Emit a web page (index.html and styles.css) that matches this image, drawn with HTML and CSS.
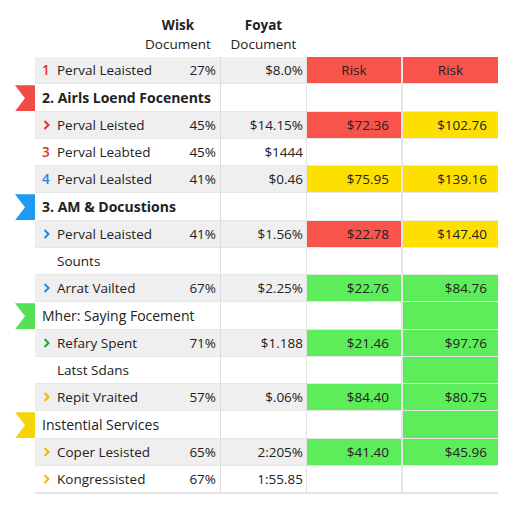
FILE: index.html
```html
<!DOCTYPE html>
<html lang="en">
<head>
    <meta charset="UTF-8">
    <title>Cost Table</title>
    <link rel="stylesheet" href="styles.css">
</head>
<body>
    <div class="sheet">
        <!-- Column headings -->
        <div class="head">
            <div></div>
            <div class="head-cell"><b>Wisk</b><span>Document</span></div>
            <div class="head-cell"><b>Foyat</b><span>Document</span></div>
        </div>

        <div class="table">
            <div class="row shade">
                <div class="name"><span class="mark red">1</span>Perval Leaisted</div>
                <div class="pct">27%</div>
                <div class="val">$8.0%</div>
                <div class="cell c-red center">Risk</div>
                <div class="cell c-red center last">Risk</div>
            </div>

            <div class="row section">
                <span class="flag f-red"></span>
                <div class="title bold">2. Airls Loend Focenents</div>
                <div class="val"></div>
                <div class="cell"></div>
                <div class="cell last"></div>
            </div>

            <div class="row shade">
                <div class="name"><span class="mark red"><svg width="7" height="10" viewBox="0 0 7 10"><path d="M1.5 1 L5.5 5 L1.5 9" fill="none" stroke="currentColor" stroke-width="2"/></svg></span>Perval Leisted</div>
                <div class="pct">45%</div>
                <div class="val">$14.15%</div>
                <div class="cell c-red">$72.36</div>
                <div class="cell c-yellow last">$102.76</div>
            </div>

            <div class="row">
                <div class="name"><span class="mark red">3</span>Perval Leabted</div>
                <div class="pct">45%</div>
                <div class="val">$1444</div>
                <div class="cell"></div>
                <div class="cell last"></div>
            </div>

            <div class="row shade">
                <div class="name"><span class="mark blue">4</span>Perval Lealsted</div>
                <div class="pct">41%</div>
                <div class="val">$0.46</div>
                <div class="cell c-yellow">$75.95</div>
                <div class="cell c-yellow last">$139.16</div>
            </div>

            <div class="row section">
                <span class="flag f-blue"></span>
                <div class="title bold">3. AM &amp; Docustions</div>
                <div class="val"></div>
                <div class="cell"></div>
                <div class="cell last"></div>
            </div>

            <div class="row shade">
                <div class="name"><span class="mark blue"><svg width="7" height="10" viewBox="0 0 7 10"><path d="M1.5 1 L5.5 5 L1.5 9" fill="none" stroke="currentColor" stroke-width="2"/></svg></span>Perval Leaisted</div>
                <div class="pct">41%</div>
                <div class="val">$1.56%</div>
                <div class="cell c-red">$22.78</div>
                <div class="cell c-yellow last">$147.40</div>
            </div>

            <div class="row">
                <div class="name"><span class="mark"></span>Sounts</div>
                <div class="pct"></div>
                <div class="val"></div>
                <div class="cell"></div>
                <div class="cell last"></div>
            </div>

            <div class="row shade">
                <div class="name"><span class="mark blue"><svg width="7" height="10" viewBox="0 0 7 10"><path d="M1.5 1 L5.5 5 L1.5 9" fill="none" stroke="currentColor" stroke-width="2"/></svg></span>Arrat Vailted</div>
                <div class="pct">67%</div>
                <div class="val">$2.25%</div>
                <div class="cell c-green">$22.76</div>
                <div class="cell c-green last">$84.76</div>
            </div>

            <div class="row section">
                <span class="flag f-green"></span>
                <div class="title">Mher: Saying Focement</div>
                <div class="val"></div>
                <div class="cell"></div>
                <div class="cell c-green last"></div>
            </div>

            <div class="row shade">
                <div class="name"><span class="mark green"><svg width="7" height="10" viewBox="0 0 7 10"><path d="M1.5 1 L5.5 5 L1.5 9" fill="none" stroke="currentColor" stroke-width="2"/></svg></span>Refary Spent</div>
                <div class="pct">71%</div>
                <div class="val">$1.188</div>
                <div class="cell c-green">$21.46</div>
                <div class="cell c-green last">$97.76</div>
            </div>

            <div class="row">
                <div class="name"><span class="mark"></span>Latst Sdans</div>
                <div class="pct"></div>
                <div class="val"></div>
                <div class="cell"></div>
                <div class="cell c-green last"></div>
            </div>

            <div class="row shade">
                <div class="name"><span class="mark yellow"><svg width="7" height="10" viewBox="0 0 7 10"><path d="M1.5 1 L5.5 5 L1.5 9" fill="none" stroke="currentColor" stroke-width="2"/></svg></span>Repit Vraited</div>
                <div class="pct">57%</div>
                <div class="val">$.06%</div>
                <div class="cell c-green">$84.40</div>
                <div class="cell c-green last">$80.75</div>
            </div>

            <div class="row section">
                <span class="flag f-yellow"></span>
                <div class="title">Instential Services</div>
                <div class="val"></div>
                <div class="cell"></div>
                <div class="cell c-green last"></div>
            </div>

            <div class="row shade">
                <div class="name"><span class="mark yellow"><svg width="7" height="10" viewBox="0 0 7 10"><path d="M1.5 1 L5.5 5 L1.5 9" fill="none" stroke="currentColor" stroke-width="2"/></svg></span>Coper Lesisted</div>
                <div class="pct">65%</div>
                <div class="val">2:205%</div>
                <div class="cell c-green">$41.40</div>
                <div class="cell c-green last">$45.96</div>
            </div>

            <div class="row">
                <div class="name"><span class="mark yellow"><svg width="7" height="10" viewBox="0 0 7 10"><path d="M1.5 1 L5.5 5 L1.5 9" fill="none" stroke="currentColor" stroke-width="2"/></svg></span>Kongressisted</div>
                <div class="pct">67%</div>
                <div class="val">1:55.85</div>
                <div class="cell"></div>
                <div class="cell last"></div>
            </div>
        </div>
    </div>
</body>
</html>
```

FILE: styles.css
```css
body {
    margin: 0;
    background: #fff;
    font-family: "Open Sans", "Liberation Sans", sans-serif;
    font-size: 13.5px;
    color: #222;
}

.sheet {
    padding: 15px 0 0 35px;
    width: 463px;
}

/* Column headings */
.head {
    display: grid;
    grid-template-columns: 100px 86px 85px;
    height: 42px;
}

.head-cell {
    display: flex;
    flex-direction: column;
    align-items: center;
    padding-top: 1px;
    line-height: 19px;
    font-size: 13.5px;
}

.head-cell b {
    font-weight: 700;
}

/* Table body */
.table {
    border-right: 1px solid #e2e2e2;
    border-bottom: 1px solid #e2e2e2;
}

.row {
    position: relative;
    display: grid;
    grid-template-columns: 100px 86px 85px 95px 97px;
    height: 27.25px;
    background: #fff;
}

.row.shade {
    background: #efefef;
}

.row > div {
    display: flex;
    align-items: center;
    box-sizing: border-box;
    border-bottom: 1px solid #e6e6e6;
    white-space: nowrap;
}

.name {
    padding-left: 7px;
}

.mark {
    display: inline-flex;
    flex-shrink: 0;
    width: 15px;
    font-weight: 600;
}

.mark svg {
    margin-left: 1px;
}

.red { color: #e0322e; }
.blue { color: #1e88e5; }
.green { color: #1fa82e; }
.yellow { color: #f2b800; }

.pct {
    justify-content: flex-end;
    padding-right: 4px;
    border-right: 1px solid #dcdcdc;
}

.title {
    grid-column: span 2;
    padding-left: 7px;
    font-size: 14px;
    border-right: 1px solid #dcdcdc;
}

.title.bold {
    font-weight: 700;
    font-size: 14px;
}

.val {
    justify-content: flex-end;
    padding-right: 3px;
}

.cell {
    justify-content: flex-end;
    padding-right: 12px;
    background: #fff;
    border-left: 1px solid #e2e2e2;
    font-size: 13.5px;
}

.cell.last {
    border-left: 2px solid #e6e6e6;
    padding-right: 11px;
}

.cell.center {
    justify-content: center;
    padding-right: 0;
}

.c-red { background: #f8544b; }
.c-yellow { background: #fde002; }
.c-green { background: #5ded5b; }

/* Ribbon flags at the section rows */
.flag {
    position: absolute;
    left: -20px;
    top: 1px;
    width: 20px;
    height: 26px;
    clip-path: polygon(0 0, 100% 0, 100% 100%, 0 100%, 50% 50%);
}

.f-red { background: #f14b45; }
.f-blue { background: #1e9bf0; }
.f-green { background: #55e05a; }
.f-yellow { background: #f7d30a; }
```
